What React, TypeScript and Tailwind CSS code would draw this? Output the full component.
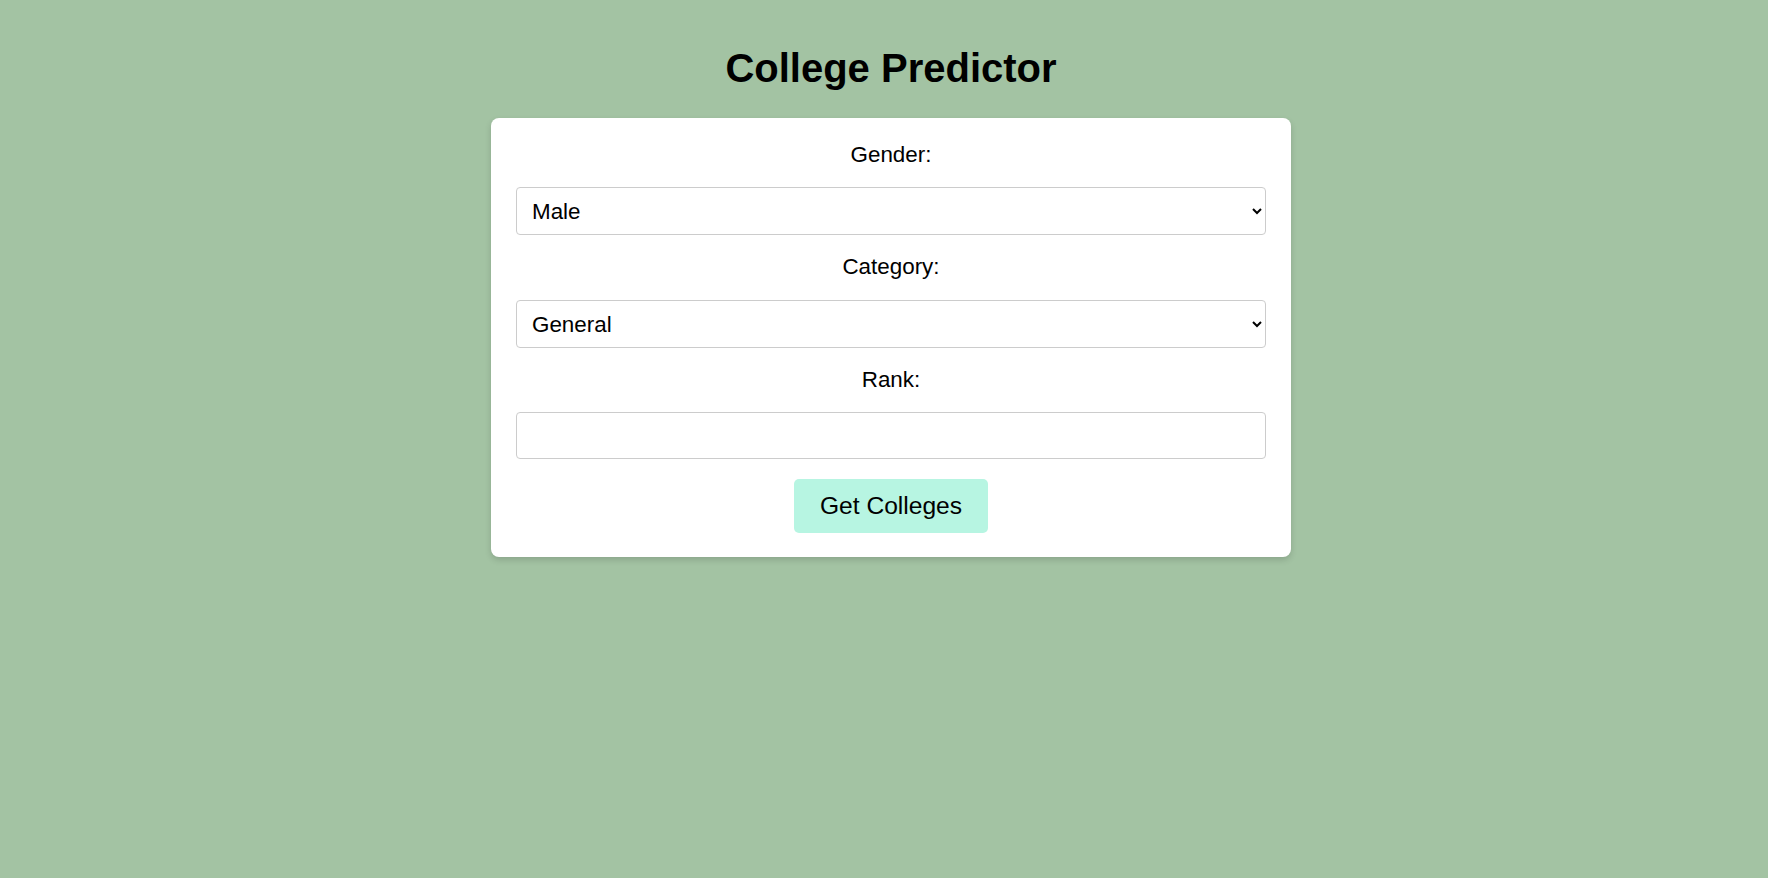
import React from "react";

export default function App() {
  return (
    <div
      className="min-h-screen w-full bg-[#a3c3a3] flex flex-col items-center pl-[14px] pt-[45px] text-black"
      style={{ fontFamily: '"Liberation Sans", Arial, sans-serif' }}
    >
      <h1 className="text-[40px] leading-[46px] font-bold m-0">College Predictor</h1>
      <div className="mt-[27px] w-[800px] bg-white rounded-[8px] shadow-[0_3px_6px_rgba(0,0,0,0.15)] px-[25px] pt-[24px] pb-[24px] flex flex-col items-center">
        <label className="block text-[22.4px] leading-[26px] mb-[19px]">Gender:</label>
        <select
          defaultValue="Male"
          className="w-full h-[48px] border border-[#cccccc] rounded-[4px] bg-white pl-[11px] pr-[6px] text-[22.4px] mb-[19px] outline-none"
        >
          <option>Male</option>
          <option>Female</option>
        </select>
        <label className="block text-[22.4px] leading-[26px] mb-[20px]">Category:</label>
        <select
          defaultValue="General"
          className="w-full h-[48px] border border-[#cccccc] rounded-[4px] bg-white pl-[11px] pr-[6px] text-[22.4px] mb-[19px] outline-none"
        >
          <option>General</option>
          <option>OBC</option>
          <option>SC</option>
          <option>ST</option>
        </select>
        <label className="block text-[22.4px] leading-[26px] mb-[19px]">Rank:</label>
        <input
          type="number"
          className="w-full h-[47px] border border-[#cccccc] rounded-[4px] bg-white px-[14px] text-[22.4px] outline-none"
        />
        <button className="mt-[20px] w-[194px] h-[54px] rounded-[5px] bg-[#b7f5e2] text-[24.6px] leading-[28px]">
          Get Colleges
        </button>
      </div>
    </div>
  );
}
